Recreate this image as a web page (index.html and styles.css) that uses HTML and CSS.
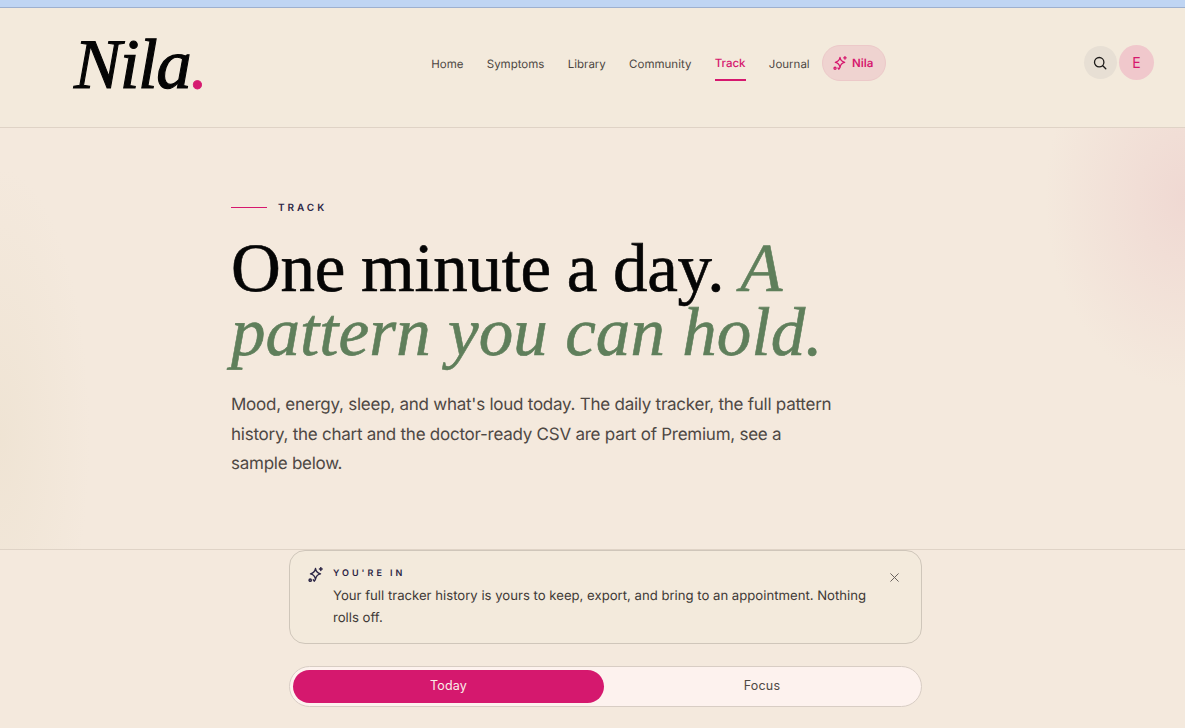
FILE: index.html

```html
<!DOCTYPE html>
<html lang="en">
<head>
  <meta charset="UTF-8" />
  <title>Nila - Track</title>
  <link rel="stylesheet" href="styles.css">
</head>
<body>
  <div class="browser-strip"></div>
  <header class="site-header">
    <a class="logo">Nila<span class="logo-dot">.</span></a>
    <nav class="nav">
      <a>Home</a>
      <a>Symptoms</a>
      <a>Library</a>
      <a>Community</a>
      <a class="active">Track</a>
      <a>Journal</a>
      <a class="nila-pill">
        <svg width="14" height="14" viewBox="0 0 24 24" fill="none" stroke="currentColor" stroke-width="2.200" stroke-linecap="round" stroke-linejoin="round">
          <path d="M12 2.500c.9 5 2.900 7.300 8 8.500-5.100 1.100-7.100 3.300-8 8.500-1-5.200-3.100-7.400-8-8.500 4.900-1.200 7-3.500 8-8.500z"/>
          <path d="M20.500 1v4.500M18.300 3.200h4.400"/>
          <circle cx="3.500" cy="21" r="1.800"/>
          <path d="M8.500 20.500l1.500 2.200 1.500-2.200"/>
        </svg>
        Nila
      </a>
    </nav>
    <div class="header-actions">
      <button class="icon-btn search-btn">
        <svg width="14" height="14" viewBox="0 0 14 14" fill="none" stroke="currentColor" stroke-width="1.300" stroke-linecap="round">
          <circle cx="6.200" cy="6.200" r="4.700"/>
          <path d="M9.800 9.800l3 3"/>
        </svg>
      </button>
      <button class="icon-btn avatar">E</button>
    </div>
  </header>

  <section class="hero">
    <div class="hero-inner">
      <div class="eyebrow"><span class="eyebrow-line"></span>TRACK</div>
      <h1>One minute a day. <em>A pattern you can hold.</em></h1>
      <p class="lede">Mood, energy, sleep, and what's loud today. The daily tracker, the full pattern history, the chart and the doctor-ready CSV are part of Premium, see a sample below.</p>
    </div>
  </section>

  <main class="content">
    <div class="notice">
      <svg class="notice-icon" width="15" height="15" viewBox="0 0 24 24" fill="none" stroke="currentColor" stroke-width="2.300" stroke-linecap="round" stroke-linejoin="round">
        <path d="M12 2.500c.9 5 2.900 7.300 8 8.500-5.100 1.100-7.100 3.300-8 8.500-1-5.200-3.100-7.400-8-8.500 4.900-1.200 7-3.500 8-8.500z"/>
        <path d="M20.500 1v4.500M18.300 3.200h4.400"/>
        <circle cx="3.500" cy="21" r="1.800"/>
        <path d="M8.500 20.500l1.500 2.200 1.500-2.200"/>
      </svg>
      <div class="notice-body">
        <div class="notice-title">YOU'RE IN</div>
        <p>Your full tracker history is yours to keep, export, and bring to an appointment. Nothing rolls off.</p>
      </div>
      <button class="notice-close">
        <svg width="9" height="9" viewBox="0 0 9 9" stroke="currentColor" stroke-width="1" stroke-linecap="round"><path d="M.7.7l7.600 7.600M8.300.7L.7 8.300"/></svg>
      </button>
    </div>

    <div class="tabs">
      <button class="tab selected">Today</button>
      <button class="tab">Focus</button>
    </div>
  </main>
</body>
</html>
```

FILE: styles.css

```css
* {
  box-sizing: border-box;
}
body {
  margin: 0;
  height: 728px;
  overflow: hidden;
  background-color: #f4e9dd;
  color: #3e3936;
  font-family: "Inter", sans-serif;
  text-rendering: geometricPrecision;
}
.browser-strip {
  height: 8px;
  background: #bfd5f3;
  border-bottom: 1px solid #9db0cf;
}
.site-header {
  height: 120px;
  display: flex;
  align-items: center;
  justify-content: space-between;
  padding: 0 31px 8px 74px;
  border-bottom: 1px solid #dfd3c6;
  background: #f3eadc;
}
.logo {
  font-family: "Liberation Serif", serif;
  font-style: italic;
  font-size: 71px;
  letter-spacing: -1.500px;
  -webkit-text-stroke: 1.100px #050505;
  color: #050505;
  line-height: 1;
  margin-top: 4px;
}
.logo-dot {
  color: #d61a70;
  -webkit-text-stroke: 0.8px #d61a70;
}
.nav {
  display: flex;
  align-items: center;
  gap: 23.300px;
  font-size: 11.500px;
  color: #4c4642;
  margin-left: 27px;
}
.nav a {
  display: block;
}
.nav a.active {
  color: #d6186e;
  font-weight: 500;
  padding-bottom: 9px;
  margin-top: 3px;
  border-bottom: 2px solid #d6186e;
  position: relative;
  top: 3px;
}
.nav a.nila-pill {
  display: flex;
  align-items: center;
  gap: 5px;
  height: 36px;
  padding: 0 12px 0 10px;
  margin: -2px 0 0 -11px;
  border-radius: 18px;
  background: #efd3d0;
  border: 1px solid #ecc9c9;
  color: #d6186e;
  font-weight: 600;
}
.header-actions {
  display: flex;
  align-items: center;
  gap: 2px;
  margin-top: -2px;
}
.icon-btn {
  border: 0;
  padding: 0;
  border-radius: 50%;
  display: flex;
  align-items: center;
  justify-content: center;
  font-family: inherit;
}
.search-btn {
  width: 33px;
  height: 33px;
  background: #e7dfd4;
  color: #1c1a18;
}
.avatar {
  width: 35px;
  height: 35px;
  background: #f0c8cc;
  color: #d6186e;
  font-size: 14px;
}
.hero {
  height: 422px;
  border-bottom: 1px solid #dfd3c6;
  padding: 73px 0 0 231px;
  background-image:
    radial-gradient(ellipse 140px 190px at 100% 70px, rgba(235, 200, 200, 0.5), transparent),
    radial-gradient(ellipse 90px 270px at 0 310px, rgba(232, 220, 198, 0.4), transparent);
}
.hero-inner {
  width: 605px;
}
.eyebrow {
  display: flex;
  align-items: center;
  gap: 11px;
  font-size: 10px;
  font-weight: 600;
  letter-spacing: 2.950px;
  color: #2b2545;
  height: 13px;
}
.eyebrow-line {
  width: 36px;
  height: 1px;
  background: #d6186e;
}
h1 {
  margin: 22px 0 0;
  width: 620px;
  font-family: "Liberation Serif", serif;
  font-weight: 400;
  font-size: 69px;
  line-height: 64px;
  letter-spacing: -0.300px;
  word-spacing: -1px;
  -webkit-text-stroke: 0.6px #050505;
  color: #050505;
}
h1 em {
  color: #5f7f5b;
  letter-spacing: 0.060px;
  word-spacing: 0;
  -webkit-text-stroke: 0.6px #5f7f5b;
}
.lede {
  margin: 27px 0 0;
  font-size: 17px;
  letter-spacing: -0.250px;
  line-height: 29.500px;
  color: #4e4844;
}
.content {
  width: 633px;
  margin-left: 289px;
}
.notice {
  height: 94px;
  border: 1px solid #cfc6ba;
  border-radius: 16px;
  padding: 14px 18px 0 18px;
  display: flex;
  gap: 10px;
  background: #f3eadc;
}
.notice-icon {
  flex: none;
  color: #2b2545;
  margin-top: 2px;
}
.notice-body {
  flex: 1;
}
.notice-title {
  font-size: 9px;
  font-weight: 600;
  letter-spacing: 3px;
  color: #2b2545;
  line-height: 12px;
  margin-top: 3px;
}
.notice-body p {
  margin: 5px 0 0;
  font-size: 13.150px;
  line-height: 22px;
  color: #3e3936;
}
.notice-close {
  flex: none;
  align-self: flex-start;
  width: 9px;
  height: 9px;
  margin: 8px 4px 0 6px;
  padding: 0;
  border: 0;
  background: none;
  color: #6a635e;
  display: flex;
}
.tabs {
  margin-top: 22px;
  height: 41px;
  border: 1px solid #d8cdc4;
  border-radius: 21px;
  background: #fdf2ee;
  padding: 3px;
  display: grid;
  grid-template-columns: 311px 1fr;
}
.tab {
  border: 0;
  background: none;
  border-radius: 17px;
  font-family: inherit;
  font-size: 12.500px;
  letter-spacing: 0.200px;
  color: #4e4844;
  padding: 0 0 2px;
}
.tab.selected {
  background: #d5186e;
  color: #fbeee9;
}
.tab:not(.selected) {
  padding-left: 2px;
}
```
